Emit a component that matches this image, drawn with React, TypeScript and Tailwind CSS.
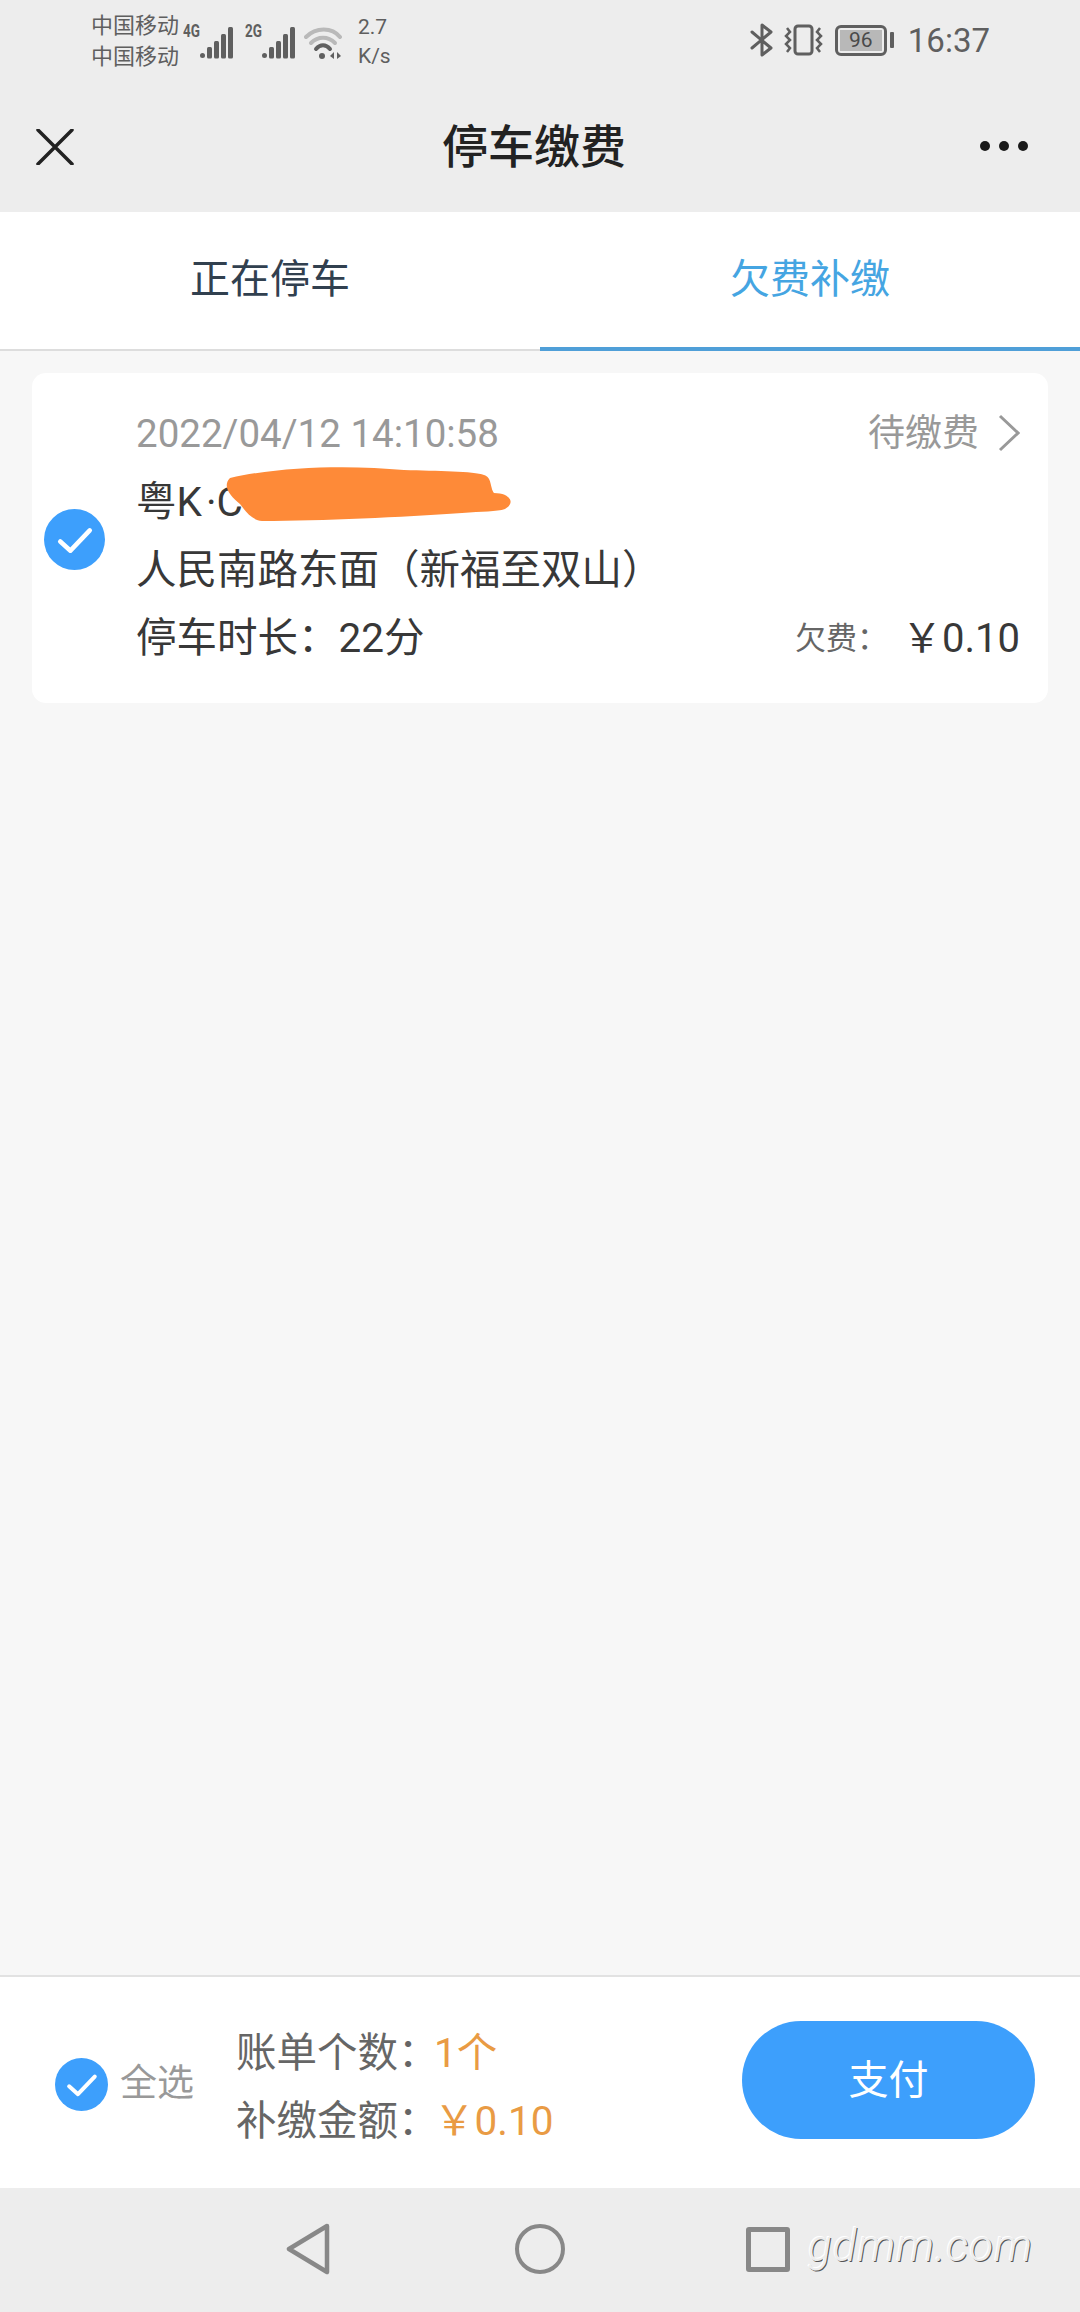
import React from "react";

function Bars() {
  return (
    <svg width="33" height="32" viewBox="0 0 33 32" className="block">
      <circle cx="2.5" cy="28.5" r="2.5" fill="#5f5f5f" />
      <rect x="7" y="20" width="5" height="11.5" rx="1.5" fill="#5f5f5f" />
      <rect x="14" y="14" width="5" height="17.5" rx="1.5" fill="#5f5f5f" />
      <rect x="21" y="7" width="5" height="24.5" rx="1.5" fill="#5f5f5f" />
      <rect x="28" y="0" width="5" height="31.5" rx="1.5" fill="#5f5f5f" />
    </svg>
  );
}

function Wifi() {
  return (
    <svg width="40" height="32" viewBox="0 0 40 32" className="block">
      <path d="M2 10C12 0 28 0 36 10" fill="none" stroke="#b9b9b9" strokeWidth="4" strokeLinecap="round" />
      <path d="M7 16C14 9 24 9 31 16" fill="none" stroke="#b9b9b9" strokeWidth="4" strokeLinecap="round" />
      <path d="M12 22C16 17 22 17 26 22" fill="none" stroke="#5f5f5f" strokeWidth="4" strokeLinecap="round" />
      <circle cx="18" cy="29" r="3" fill="#5f5f5f" />
      <path d="M30 25L26 29L30 32Z" fill="#5f5f5f" />
      <path d="M33 25L37 29L33 32Z" fill="#5f5f5f" />
    </svg>
  );
}

function Check({ size, className }: { size: number; className?: string }) {
  return (
    <svg width={size} height={size} viewBox="0 0 60 60" className={`block shrink-0 ${className ?? ""}`}>
      <circle cx="30" cy="30" r="30" fill="#3d9ffc" />
      <path d="M16 32L26 41L45 21" fill="none" stroke="#fff" strokeWidth="4.5" strokeLinecap="round" strokeLinejoin="round" />
    </svg>
  );
}

export default function App() {
  return (
    <div className="flex h-[2312px] w-[1080px] flex-col overflow-hidden bg-[#f7f7f7] font-['Roboto','Noto_Sans_CJK_SC',sans-serif] text-[#383838]">
      {/* Status bar + header */}
      <div className="h-[212px] shrink-0 bg-[#ededed]">
        <div className="flex h-[72px] items-center pl-[91px] pr-[90px] pt-[10px] text-[#5f5f5f]">
          <div className="w-[92px] text-[22px] leading-[31px]">
            <div>中国移动</div>
            <div>中国移动</div>
          </div>
          <div className="flex items-start">
            <span className="mt-[-2px] w-[18px] origin-left scale-x-75 text-[18px] font-bold leading-[20px]">4G</span>
            <div className="ml-[-1px] mt-[4px]"><Bars /></div>
            <span className="ml-[12px] mt-[-2px] w-[18px] origin-left scale-x-75 text-[18px] font-bold leading-[20px]">2G</span>
            <div className="ml-[-1px] mt-[4px]"><Bars /></div>
            <div className="ml-[9px] mt-[4px]"><Wifi /></div>
          </div>
          <div className="ml-[14px] mt-[2px] text-[21px] leading-[29px]">
            <div>2.7</div>
            <div>K/s</div>
          </div>
          <div className="ml-auto mt-[-2px] flex items-center">
            <svg width="24" height="34" viewBox="0 0 24 34" className="block">
              <path d="M2 9L21 25L12 32V2L21 9L2 25" fill="none" stroke="#5f5f5f" strokeWidth="3" strokeLinejoin="round" strokeLinecap="round" />
            </svg>
            <svg width="40" height="32" viewBox="0 0 40 32" className="ml-[10px] block">
              <rect x="11" y="2" width="17" height="28" rx="3" fill="none" stroke="#5f5f5f" strokeWidth="3" />
              <path d="M3 4L6 8L2 12L6 16L2 20L6 24L3 28" fill="none" stroke="#5f5f5f" strokeWidth="2.5" />
              <path d="M36 4L33 8L37 12L33 16L37 20L33 24L36 28" fill="none" stroke="#5f5f5f" strokeWidth="2.5" />
            </svg>
            <div className="ml-[11px] flex items-center">
              <div className="flex h-[31px] w-[52px] items-center justify-center rounded-[6px] border-[3px] border-[#5f5f5f] p-[2px]">
                <div className="flex h-full w-full items-center justify-center bg-[#b8b8b8] text-[21px] leading-none text-[#4a4a4a]">96</div>
              </div>
              <div className="ml-[3px] h-[16px] w-[4px] rounded-[1px] bg-[#5f5f5f]" />
            </div>
            <span className="ml-[14px] text-[33px] leading-none">16:37</span>
          </div>
        </div>
        <div className="relative flex h-[140px] items-center justify-center pt-[10px]">
          <svg width="38" height="36" viewBox="0 0 38 36" className="absolute left-[36px] top-[57px] block">
            <path d="M2 1L36 35M36 1L2 35" fill="none" stroke="#222" strokeWidth="3.5" strokeLinecap="round" />
          </svg>
          <span className="mr-[12px] text-[46px] font-medium leading-none text-[#222]">停车缴费</span>
          <div className="absolute left-[980px] top-[69px] flex gap-[9px]">
            <div className="h-[10px] w-[10px] rounded-full bg-[#1a1a1a]" />
            <div className="h-[10px] w-[10px] rounded-full bg-[#1a1a1a]" />
            <div className="h-[10px] w-[10px] rounded-full bg-[#1a1a1a]" />
          </div>
        </div>
      </div>

      {/* Tabs */}
      <div className="flex h-[139px] shrink-0 bg-white">
        <div className="flex w-[540px] items-center justify-center border-b-2 border-[#dddddd] pb-[2px] text-[40px] text-[#31404f]">正在停车</div>
        <div className="flex w-[540px] items-center justify-center border-b-4 border-[#4f9fd8] text-[40px] text-[#45a5e2]">欠费补缴</div>
      </div>

      {/* List */}
      <div className="flex-1 px-[32px] pt-[22px]">
        <div className="flex h-[330px] items-center rounded-[14px] bg-white pl-[12px] pr-[28px]">
          <Check size={61} className="mt-[2px]" />
          <div className="ml-[31px] mt-[-5px] flex-1">
            <div className="flex items-center justify-between text-[38.5px] leading-[69px] text-[#999]">
              <span>2022/04/12 14:10:58</span>
              <div className="flex items-center">
                <span className="text-[37px]">待缴费</span>
                <svg width="22" height="38" viewBox="0 0 22 38" className="ml-[19px] block">
                  <path d="M2 2L20 19L2 36" fill="none" stroke="#999" strokeWidth="3" />
                </svg>
              </div>
            </div>
            <div className="relative text-[40.5px] leading-[68px]">
              粤<span className="tracking-[4px]">K</span>·C
              <svg width="298" height="60" viewBox="0 0 290 60" className="absolute left-[82px] top-[-2px] block">
                <path d="M8 12C60 0 130 -1 182 4C215 5 252 5 262 9C270 11 268 22 272 27C288 27 294 37 283 43C275 46 260 45 240 47C180 51 100 55 40 55C30 54 24 46 18 38C8 30 0 20 8 12Z" fill="#fe8a38" />
              </svg>
            </div>
            <div className="text-[40.5px] leading-[68px]">人民南路东面（新福至双山）</div>
            <div className="flex items-center justify-between leading-[69px]">
              <span className="text-[40.5px]">停车时长：22分</span>
              <div className="flex items-center">
                <span className="w-[107px] whitespace-nowrap text-[31px] text-[#666]">欠费：</span>
                <span className="text-[40px]">￥0.10</span>
              </div>
            </div>
          </div>
        </div>
      </div>

      {/* Footer */}
      <div className="flex h-[213px] shrink-0 items-center border-t-2 border-[#e2e2e2] bg-white pl-[55px] pr-[45px]">
        <Check size={53} className="mt-[4px]" />
        <span className="ml-[12px] mt-[3px] text-[37px] text-[#999]">全选</span>
        <div className="ml-[42px] mt-[8px] text-[40.5px] leading-[68px] text-[#666]">
          <div className="flex"><span className="w-[198px] whitespace-nowrap">账单个数：</span><span className="text-[#e99b44]">1个</span></div>
          <div className="flex"><span className="w-[198px] whitespace-nowrap">补缴金额：</span><span className="text-[#e99b44]">￥0.10</span></div>
        </div>
        <div className="mb-[6px] ml-auto flex h-[118px] w-[293px] items-center justify-center rounded-full bg-[#3d9ffc] pt-[3px] text-[40px] text-white">支付</div>
      </div>

      {/* Nav */}
      <div className="relative flex h-[124px] shrink-0 items-center bg-[#ededed] pb-[2px] pl-[286px]">
        <svg width="44" height="52" viewBox="0 0 44 52" className="block">
          <path d="M41 3L3 26L41 49Z" fill="none" stroke="#888" strokeWidth="4.5" strokeLinejoin="round" />
        </svg>
        <div className="ml-[185px] h-[50px] w-[50px] rounded-full border-[4.5px] border-[#888]" />
        <div className="ml-[181px] h-[45px] w-[44px] rounded-[3px] border-[5px] border-[#888]" />
        <span className="absolute left-[808px] top-[36px] text-[44px] font-light italic leading-none tracking-[1px] text-[#ededed] [text-shadow:-1px_-1px_0_#fff,1px_1px_0_#555]">gdmm.com</span>
      </div>
    </div>
  );
}
